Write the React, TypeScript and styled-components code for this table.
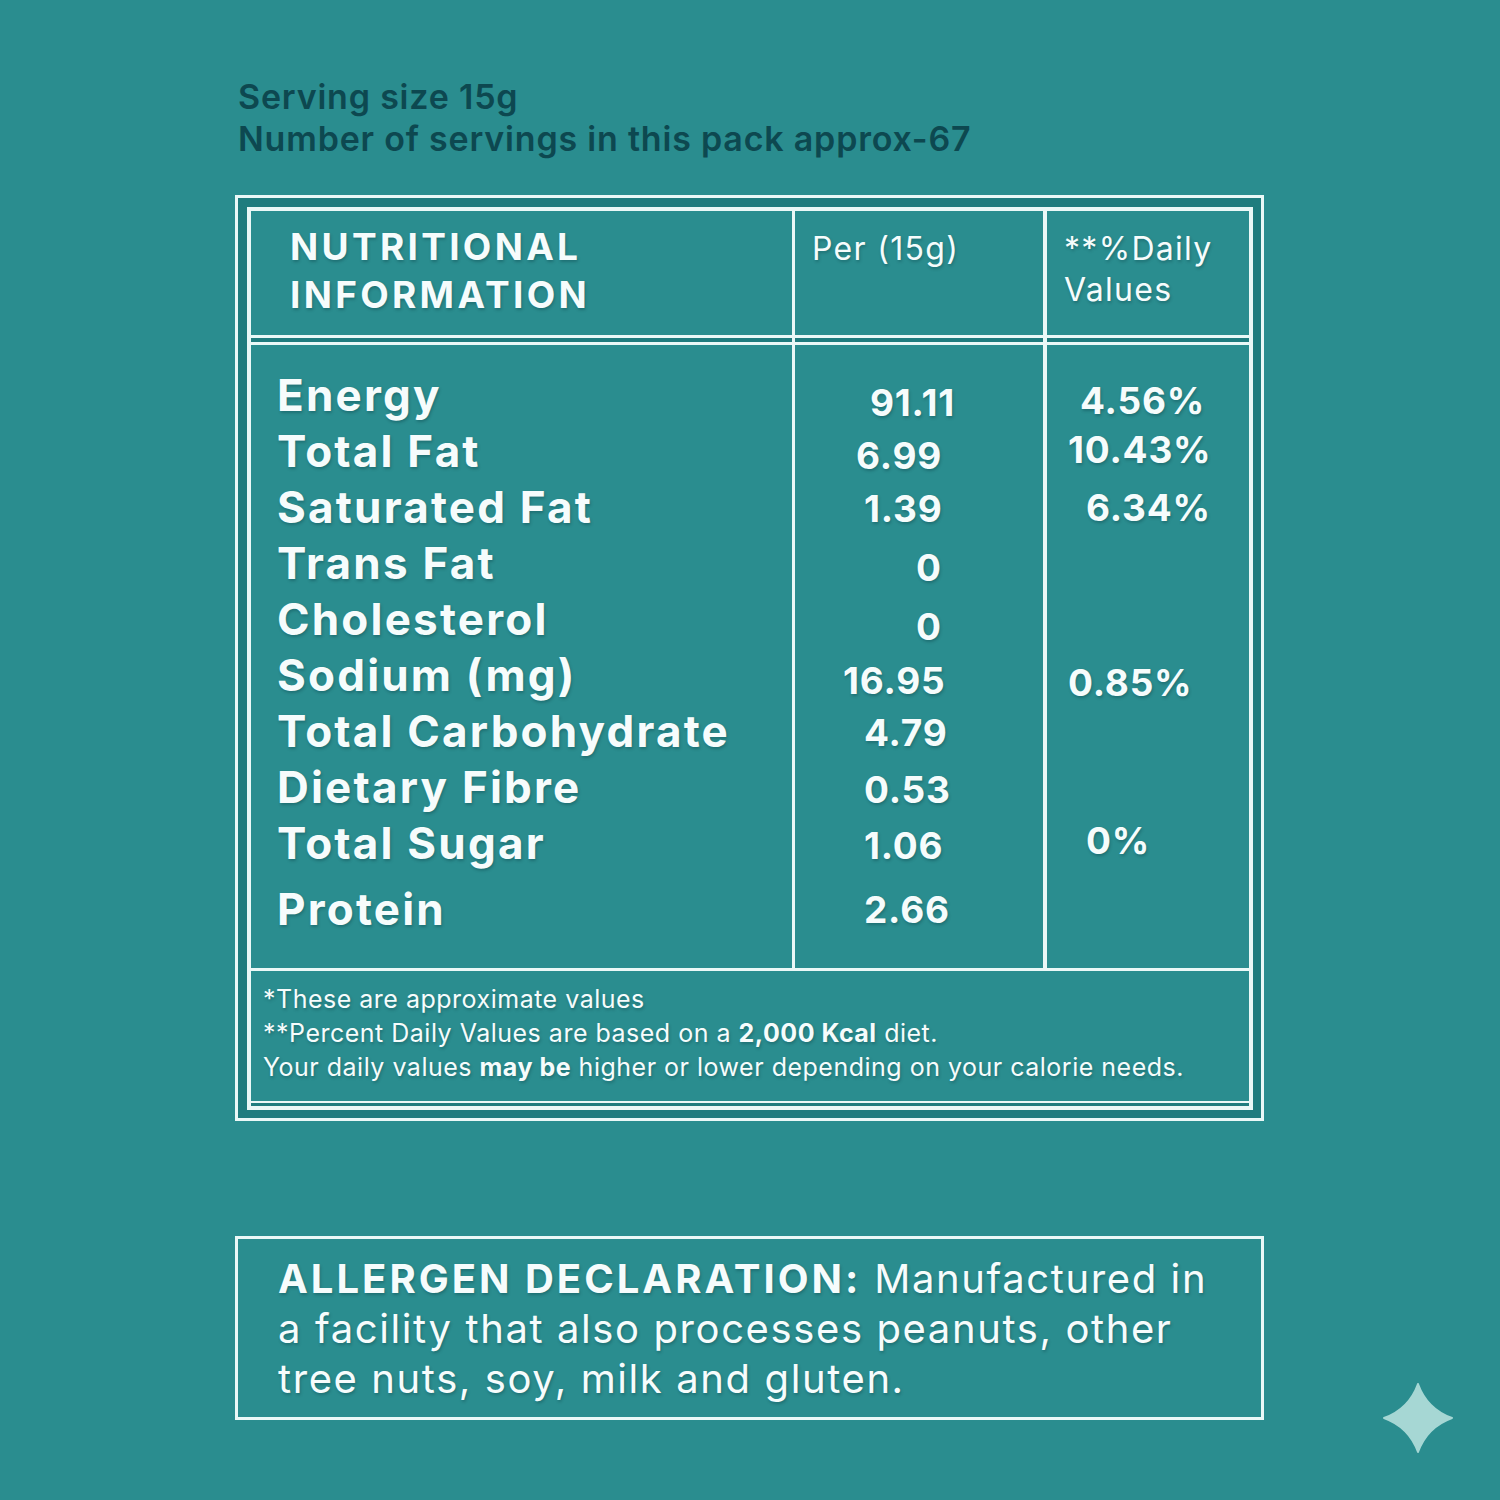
import React from 'react';
import styled, { createGlobalStyle } from 'styled-components';

const LINE = '#eaf8f7';
const BG = '#2a8d8f';
const GAP = '#1f7c7e';
const INK = '#f6fcfc';
const SHADOW = '1px 2px 3px rgba(0, 40, 45, 0.28)';

const Global = createGlobalStyle`
  html, body { margin: 0; padding: 0; background: ${BG}; }
  body { font-family: Inter, "Noto Sans", sans-serif; }
`;

const Page = styled.div`
  position: relative;
  width: 1500px;
  height: 1500px;
  box-sizing: border-box;
  background: ${BG};
  padding: 76px 0 0 235px;
  display: flex;
  flex-direction: column;
`;

const Serving = styled.div`
  margin-left: 3px;
  color: #0d4850;
  font-weight: 600;
  font-size: 34px;
  line-height: 42px;
  letter-spacing: 0.8px;
`;

const Frame = styled.div`
  margin-top: 35px;
  width: 1029px;
  box-sizing: border-box;
  border: 3px solid ${LINE};
  padding: 9px 8px 8px 9px;
  background: ${GAP};
`;

const Table = styled.div`
  border: 4px solid ${LINE};
  background: ${GAP};
  padding-bottom: 3px;
  display: flex;
  flex-direction: column;
`;

const Grid = styled.div<{ $top?: boolean; $bottom?: boolean }>`
  display: grid;
  grid-template-columns: 544px 252px 1fr;
  background: ${BG};
  ${(p) => (p.$top ? `border-top: 3px solid ${LINE};` : '')}
  ${(p) => (p.$bottom ? `border-bottom: 3px solid ${LINE};` : '')}
`;

const Cell = styled.div<{ $line?: number; $h?: number }>`
  box-sizing: border-box;
  ${(p) => (p.$line ? `border-right: ${p.$line}px solid ${LINE};` : '')}
  ${(p) => (p.$h !== undefined ? `height: ${p.$h}px;` : '')}
`;

const GapRow = styled(Grid)`
  background: ${GAP};
  height: 4px;
`;

const HeadTitle = styled(Cell)`
  height: 124px;
  padding: 12px 0 0 39px;
  color: ${INK};
  font-weight: 700;
  font-size: 37px;
  line-height: 48px;
  letter-spacing: 3.3px;
  text-shadow: ${SHADOW};
`;

const HeadCol = styled(Cell)`
  height: 124px;
  padding: 17px 0 0 17px;
  color: ${INK};
  font-weight: 400;
  font-size: 32px;
  line-height: 41px;
  letter-spacing: 1.3px;
  text-shadow: ${SHADOW};
`;

const Row = styled.div`
  display: contents;
`;

const Label = styled(Cell)<{ $pt?: number }>`
  display: flex;
  align-items: center;
  padding: ${(p) => p.$pt ?? 0}px 0 0 26px;
  color: ${INK};
  font-weight: 700;
  font-size: 44px;
  letter-spacing: 2.2px;
  white-space: nowrap;
  text-shadow: ${SHADOW};
`;

const Num = styled(Cell)<{ $x: number; $dy: number; $pt?: number }>`
  display: flex;
  align-items: center;
  padding-left: ${(p) => p.$x}px;
  padding-top: ${(p) => (p.$pt ?? 0) + Math.max(0, p.$dy * 2)}px;
  padding-bottom: ${(p) => Math.max(0, -p.$dy * 2)}px;
  color: ${INK};
  font-weight: 700;
  font-size: 37px;
  letter-spacing: 0.8px;
  white-space: nowrap;
  text-shadow: ${SHADOW};
`;

const Footer = styled.div`
  background: ${BG};
  border-top: 3px solid ${LINE};
  border-bottom: 2px solid ${LINE};
  padding: 11px 12px 0 12px;
  height: 135px;
  box-sizing: border-box;
  color: ${INK};
  font-size: 25px;
  line-height: 34px;
  letter-spacing: 0.5px;
  text-shadow: ${SHADOW};
  & b { font-weight: 700; }
`;

const Allergen = styled.div`
  margin-top: 115px;
  width: 1029px;
  box-sizing: border-box;
  border: 3px solid ${LINE};
  padding: 15px 20px 13px 40px;
  color: ${INK};
  font-size: 40px;
  line-height: 50px;
  letter-spacing: 1.6px;
  text-shadow: ${SHADOW};
  & b { font-weight: 700; letter-spacing: 3px; }
`;

const Sparkle = styled.svg`
  position: absolute;
  right: 47px;
  bottom: 47px;
  width: 70px;
  height: 70px;
`;

type Nutrient = {
  name: string;
  value: string;
  vx: number;
  vdy: number;
  dv?: string;
  dx?: number;
  ddy?: number;
  h: number;
  pt?: number;
};

const rows: Nutrient[] = [
  { name: 'Energy', value: '91.11', vx: 75, vdy: 7, dv: '4.56%', dx: 33, ddy: 5, h: 56 },
  { name: 'Total Fat', value: '6.99', vx: 61, vdy: 4, dv: '10.43%', dx: 21, ddy: -2, h: 56 },
  { name: 'Saturated Fat', value: '1.39', vx: 69, vdy: 1, dv: '6.34%', dx: 39, ddy: 0, h: 56 },
  { name: 'Trans Fat', value: '0', vx: 121, vdy: 4, h: 56 },
  { name: 'Cholesterol', value: '0', vx: 121, vdy: 7, h: 56 },
  { name: 'Sodium (mg)', value: '16.95', vx: 48, vdy: 5, dv: '0.85%', dx: 21, ddy: 7, h: 56 },
  { name: 'Total Carbohydrate', value: '4.79', vx: 69, vdy: 1, h: 56 },
  { name: 'Dietary Fibre', value: '0.53', vx: 69, vdy: 2, h: 56 },
  { name: 'Total Sugar', value: '1.06', vx: 69, vdy: 2, dv: '0%', dx: 39, ddy: -3, h: 56 },
  { name: 'Protein', value: '2.66', vx: 69, vdy: 0, h: 66, pt: 10 },
];

export default function App() {
  return (
    <Page>
      <Global />
      <Serving>
        Serving size 15g
        <br />
        Number of servings in this pack approx-67
      </Serving>

      <Frame>
        <Table>
          <Grid $bottom>
            <HeadTitle $line={3}>
              NUTRITIONAL
              <br />
              INFORMATION
            </HeadTitle>
            <HeadCol $line={4}>Per (15g)</HeadCol>
            <HeadCol>
              **%Daily
              <br />
              Values
            </HeadCol>
          </Grid>
          <GapRow>
            <Cell $line={3} />
            <Cell $line={4} />
            <Cell />
          </GapRow>
          <Grid $top>
            <Row>
              <Cell $line={3} $h={22} />
              <Cell $line={4} $h={22} />
              <Cell $h={22} />
            </Row>
            {rows.map((r) => (
              <Row key={r.name}>
                <Label $line={3} $h={r.h} $pt={r.pt}>
                  {r.name}
                </Label>
                <Num $line={4} $h={r.h} $x={r.vx} $dy={r.vdy} $pt={r.pt}>
                  {r.value}
                </Num>
                <Num $h={r.h} $x={r.dx ?? 0} $dy={r.ddy ?? 0} $pt={r.pt}>
                  {r.dv ?? ''}
                </Num>
              </Row>
            ))}
            <Row>
              <Cell $line={3} $h={31} />
              <Cell $line={4} $h={31} />
              <Cell $h={31} />
            </Row>
          </Grid>
          <Footer>
            *These are approximate values
            <br />
            **Percent Daily Values are based on a <b>2,000 Kcal</b> diet.
            <br />
            Your daily values <b>may be</b> higher or lower depending on your calorie needs.
          </Footer>
        </Table>
      </Frame>

      <Allergen>
        <b>ALLERGEN DECLARATION:</b> Manufactured in
        <br />
        a facility that also processes peanuts, other
        <br />
        tree nuts, soy, milk and gluten.
      </Allergen>

      <Sparkle viewBox="0 0 70 70" aria-hidden="true">
        <path
          d="M35 1 Q44 26 69 35 Q44 44 35 69 Q26 44 1 35 Q26 26 35 1 Z"
          fill="#a6d7d4"
          stroke="#a6d7d4"
          strokeWidth="2"
          strokeLinejoin="round"
        />
      </Sparkle>
    </Page>
  );
}
